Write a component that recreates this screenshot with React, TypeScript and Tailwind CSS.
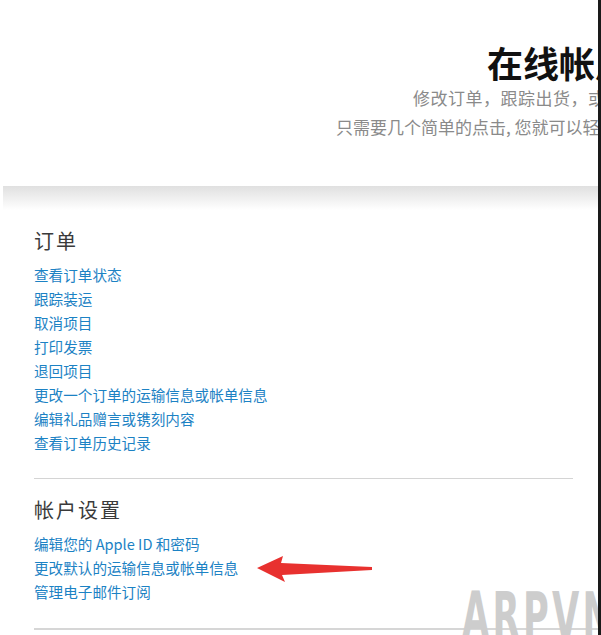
const orderLinks = [
  "查看订单状态",
  "跟踪装运",
  "取消项目",
  "打印发票",
  "退回项目",
  "更改一个订单的运输信息或帐单信息",
  "编辑礼品赠言或镌刻内容",
  "查看订单历史记录",
];

const accountLinks = ["编辑您的 Apple ID 和密码", "更改默认的运输信息或帐单信息", "管理电子邮件订阅"];

function RedArrow() {
  return (
    <svg className="absolute left-[250px] top-[550px]" width="130" height="40" viewBox="0 0 130 40">
      <path d="M7 18 L33 6 L31 13 L122 17 L122 20 L32 25 L35 32 Z" fill="#e8312f" />
    </svg>
  );
}

export default function App() {
  return (
    <div
      className="w-[601px] h-[635px] overflow-hidden bg-white flex"
      style={{ fontFamily: '"Noto Sans CJK SC", "Noto Sans", sans-serif' }}
    >
      <main className="relative w-[598px] h-full overflow-hidden">
        <header className="h-[186px] pt-[44px] whitespace-nowrap">
          <h1 className="pl-[487px] text-[36px] leading-[36px] font-bold text-[#111]">在线帐户管理</h1>
          <p className="mt-[3px] pl-[413px] text-[17px] leading-[29px] tracking-[0.5px] text-[#8a8a8a]">修改订单，跟踪出货，或更改您的帐户</p>
          <p className="pl-[336px] text-[17px] leading-[29px] text-[#8a8a8a]">只需要几个简单的点击, 您就可以轻松管理您的订单</p>
        </header>

        <div className="ml-[3px] h-[24px] bg-gradient-to-b from-[#e0e0e0] to-white" />

        <section className="pl-[34px] pt-[17px]">
          <h2 className="text-[20px] leading-[28px] tracking-[2px] text-[#3a3a3a]">订单</h2>
          <ul className="mt-[8px] text-[14.6px] leading-[24px]">
            {orderLinks.map((t) => (
              <li key={t} className="h-[24px]">
                <a href="#" className="text-[#1c82c4]">{t}</a>
              </li>
            ))}
          </ul>
          <div className="mt-[23px] w-[539px] border-t border-[#d4d4d4]" />

          <h2 className="mt-[17px] text-[20px] leading-[28px] tracking-[2px] text-[#3a3a3a]">帐户设置</h2>
          <ul className="mt-[8px] text-[14.6px] leading-[24px]">
            {accountLinks.map((t) => (
              <li key={t} className="h-[24px]">
                <a href="#" className="text-[#1c82c4]">{t}</a>
              </li>
            ))}
          </ul>
          <div className="mt-[24px] border-t-2 border-[#d6d6d6]" />
        </section>

        <RedArrow />

        <div
          className="absolute left-[462px] top-[584px] origin-left scale-x-[0.55] text-[64px] leading-[64px] font-bold tracking-[6px] text-[#cdcdcd] whitespace-nowrap"
          style={{ fontFamily: '"DejaVu Sans", sans-serif' }}
        >
          ARPVN
        </div>
      </main>
      <div className="w-[3px] h-full bg-[#1a1a1a]" />
    </div>
  );
}
